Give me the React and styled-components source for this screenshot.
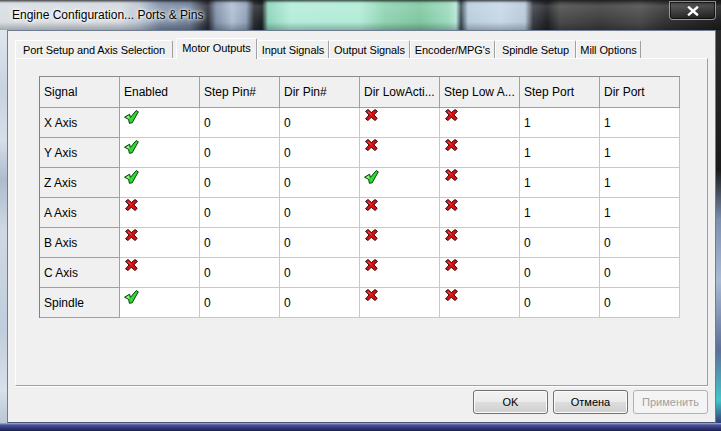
import React from "react";
import styled, { createGlobalStyle } from "styled-components";

const Global = createGlobalStyle`
  html, body { margin: 0; padding: 0; background: #222; }
  body { width: 721px; height: 431px; overflow: hidden; }
  * { box-sizing: border-box; }
`;

const Window = styled.div`
  width: 721px;
  height: 431px;
  display: flex;
  flex-direction: column;
  font-family: "Liberation Sans", Arial, sans-serif;
  color: #000;
`;

const TitleBar = styled.div`
  height: 30px;
  flex: none;
  display: flex;
  align-items: flex-start;
  justify-content: space-between;
  background:
    linear-gradient(to bottom, rgba(20,20,20,0.75) 0, rgba(20,20,20,0) 3px, rgba(255,255,255,0.12) 6px, rgba(255,255,255,0) 22px, rgba(0,0,0,0.25) 30px),
    linear-gradient(to right,
      #d9dee4 0, #d3d9e0 120px, #b9c4d2 140px, #8090a8 160px, #6f7f97 190px,
      #3a3f48 203px, #2a2d33 208px, #7e8ea6 216px, #b0bfd2 232px, #90a0b8 246px,
      #2c3036 254px, #1d2024 262px, #8fd3bb 268px, #b4ecd9 290px, #b2ebd7 360px,
      #8fd2b2 385px, #7fc7a0 420px, #9bd9bd 448px, #b6e6d8 456px, #3a4850 461px,
      #b9cddd 468px, #c8d8e6 500px, #b8c8d8 525px, #3c4046 533px, #202226 547px,
      #4a4a4a 560px, #3d3d3d 600px, #4a4a4a 640px, #333 665px, #1e1e1e 721px);
`;

const Title = styled.span`
  margin: 8px 0 0 12px;
  font-size: 12px;
  line-height: 14px;
  color: #000;
  text-shadow: 0 0 5px #fff, 0 0 3px #fff, 0 0 8px #fff;
`;

const CloseButton = styled.div`
  width: 47px;
  height: 19px;
  margin: 1px 5px 0 0;
  border: 1px solid rgba(220, 225, 235, 0.55);
  border-radius: 0 0 4px 4px;
  background: linear-gradient(to bottom, rgba(255,255,255,0.12), rgba(0,0,0,0.25));
  box-shadow: inset 0 0 0 1px rgba(0,0,0,0.6);
  display: flex;
  align-items: center;
  justify-content: center;
`;

const Middle = styled.div`
  flex: 1;
  display: flex;
  min-height: 0;
`;

const LeftFrame = styled.div`
  width: 7px;
  flex: none;
  background: linear-gradient(to bottom, #dfe6ee 0, #c8d3e0 60px, #d6dee8 110px, #aebccd 150px, #cfd9e4 200px, #c1cddb 300px, #d8e0ea 360px, #b9c6d6 393px);
`;

const RightFrame = styled.div`
  width: 5px;
  flex: none;
  background: linear-gradient(to bottom, #2a2a2a 0, #1a1a1a 140px, #7c8fae 190px, #aabbd4 250px, #5d6f96 320px, #44c6c8 370px, #2f3d78 393px);
`;

const BottomFrame = styled.div`
  height: 8px;
  flex: none;
  background: linear-gradient(to bottom, #9fb1da 0, #4b559a 2px, #2f3677 5px, #1c2050 8px);
`;

const Content = styled.div`
  flex: 1;
  display: flex;
  flex-direction: column;
  background: #f0f0f0;
  border: 1px solid #6f7d92;
  border-bottom-color: #4a5470;
  padding: 7px 7px 8px 7px;
`;

const TabStrip = styled.div`
  height: 20px;
  display: flex;
  align-items: flex-end;
  position: relative;
  z-index: 1;
`;

const Tab = styled.div`
  flex: none;
  height: ${(p) => (p.$active ? "21px" : "18px")};
  margin-bottom: ${(p) => (p.$active ? "-1px" : "0")};
  margin-left: ${(p) => (p.$active ? "3px" : "0")};
  background: #f0f0f0;
  border-top: 1px solid #ffffff;
  border-left: 1px solid #ffffff;
  border-right: 1px solid #a0a0a0;
  border-radius: 2px 2px 0 0;
  font-size: 11px;
  letter-spacing: -0.1px;
  white-space: nowrap;
  display: flex;
  align-items: center;
  justify-content: center;
  padding-bottom: ${(p) => (p.$active ? "2px" : "0")};
`;

const Page = styled.div`
  height: 328px;
  border-top: 1px solid #ffffff;
  border-left: 1px solid #ffffff;
  border-right: 1px solid #a0a0a0;
  border-bottom: 1px solid #a0a0a0;
  box-shadow: 0 1px 0 #ffffff;
  padding: 17px 0 0 23px;
`;

const Grid = styled.div`
  display: grid;
  grid-template-columns: repeat(8, 80px);
  grid-template-rows: 31px repeat(7, 30px);
  width: 641px;
  border-left: 1px solid #808080;
  border-top: 1px solid #8a8a8a;
  box-shadow: inset 1px 0 0 #a0a0a0;
`;

const Cell = styled.div`
  background: ${(p) => (p.$head ? "#f0f0f0" : "#ffffff")};
  border-right: 1px solid ${(p) => (p.$head ? "#a0a0a0" : "#c8c8c8")};
  border-bottom: 1px solid ${(p) => (p.$head ? "#a0a0a0" : "#c8c8c8")};
  font-size: 12px;
  white-space: nowrap;
  overflow: hidden;
  display: flex;
  align-items: ${(p) => (p.$icon ? "flex-start" : "center")};
  padding-left: 4px;
  padding-top: ${(p) => (p.$head ? "0" : "1px")};
`;

const IconBox = styled.span`
  display: block;
  margin: ${(p) => (p.$ok ? "1px 0 0 0" : "0 0 0 1px")};
  line-height: 0;
`;

const ButtonRow = styled.div`
  display: flex;
  justify-content: flex-end;
  gap: 5px;
  margin-top: 4px;
`;

const Button = styled.div`
  width: 75px;
  height: 24px;
  border: 1px solid ${(p) => (p.$disabled ? "#adb2b5" : "#707070")};
  border-radius: 3px;
  background: ${(p) =>
    p.$disabled
      ? "#f4f4f4"
      : "linear-gradient(to bottom, #f2f2f2 0, #ebebeb 50%, #dddddd 51%, #cfcfcf 100%)"};
  box-shadow: inset 0 0 0 1px ${(p) => (p.$disabled ? "#f4f4f4" : "#fcfcfc")};
  color: ${(p) => (p.$disabled ? "#a0a0a0" : "#000")};
  font-size: 11px;
  display: flex;
  align-items: center;
  justify-content: center;
`;

const Check = () => (
  <svg width="15" height="14" viewBox="0 0 15 14">
    <polygon
      points="0.6,7.2 5.6,4.2 6.4,7.4 12.2,0.6 14.3,1.8 8.2,12.8 5.4,13.3 4.6,9.4"
      fill="#32d932"
      stroke="#083d08"
      strokeWidth="1"
      strokeLinejoin="round"
    />
    <polygon points="2.2,7.2 4.9,5.6 5.5,8.4 4.2,8.6" fill="#95f595" />
  </svg>
);

const Cross = () => (
  <svg width="13" height="12" viewBox="0 0 13 12">
    <polygon
      points="0.6,2.4 3,0.5 6.4,3.6 10,0.6 12.4,2.3 8.9,5.9 12.2,9.4 10,11.5 6.3,8.3 2.9,11.5 0.6,9.8 4.1,6"
      fill="#d81212"
      stroke="#330303"
      strokeWidth="1"
      strokeLinejoin="round"
    />
    <polygon points="2.8,2 6.4,5 6.3,6.3 2.3,3" fill="#ff7070" opacity="0.55" />
  </svg>
);

const CloseX = () => (
  <svg width="12" height="10" viewBox="0 0 12 10">
    <path d="M2 1.5 L10 8.5 M10 1.5 L2 8.5" stroke="#ffffff" strokeWidth="2.4" strokeLinecap="square" />
  </svg>
);

const tabs = [
  { label: "Port Setup and Axis Selection", w: 158 },
  { label: "Motor Outputs", w: 81, active: true },
  { label: "Input Signals", w: 72 },
  { label: "Output Signals", w: 81 },
  { label: "Encoder/MPG's", w: 85 },
  { label: "Spindle Setup", w: 81 },
  { label: "Mill Options", w: 65 },
];

const headers = [
  "Signal",
  "Enabled",
  "Step Pin#",
  "Dir Pin#",
  "Dir LowActi...",
  "Step Low A...",
  "Step Port",
  "Dir Port",
];

const rows = [
  ["X Axis", true, 0, 0, false, false, 1, 1],
  ["Y Axis", true, 0, 0, false, false, 1, 1],
  ["Z Axis", true, 0, 0, true, false, 1, 1],
  ["A Axis", false, 0, 0, false, false, 1, 1],
  ["B Axis", false, 0, 0, false, false, 0, 0],
  ["C Axis", false, 0, 0, false, false, 0, 0],
  ["Spindle", true, 0, 0, false, false, 0, 0],
];

function renderValue(v) {
  if (typeof v === "boolean") {
    return <IconBox $ok={v}>{v ? <Check /> : <Cross />}</IconBox>;
  }
  return v;
}

export default function App() {
  return (
    <>
      <Global />
      <Window>
        <TitleBar>
          <Title>Engine Configuration... Ports &amp; Pins</Title>
          <CloseButton>
            <CloseX />
          </CloseButton>
        </TitleBar>
        <Middle>
          <LeftFrame />
          <Content>
            <TabStrip>
              {tabs.map((t) => (
                <Tab key={t.label} $active={t.active} style={{ width: t.w }}>
                  {t.label}
                </Tab>
              ))}
            </TabStrip>
            <Page>
              <Grid>
                {headers.map((h) => (
                  <Cell key={h} $head>
                    {h}
                  </Cell>
                ))}
                {rows.map((r) =>
                  r.map((v, i) => (
                    <Cell
                      key={r[0] + i}
                      $head={i === 0}
                      $icon={typeof v === "boolean"}
                    >
                      {renderValue(v)}
                    </Cell>
                  ))
                )}
              </Grid>
            </Page>
            <ButtonRow>
              <Button>OK</Button>
              <Button>Отмена</Button>
              <Button $disabled>Применить</Button>
            </ButtonRow>
          </Content>
          <RightFrame />
        </Middle>
        <BottomFrame />
      </Window>
    </>
  );
}
